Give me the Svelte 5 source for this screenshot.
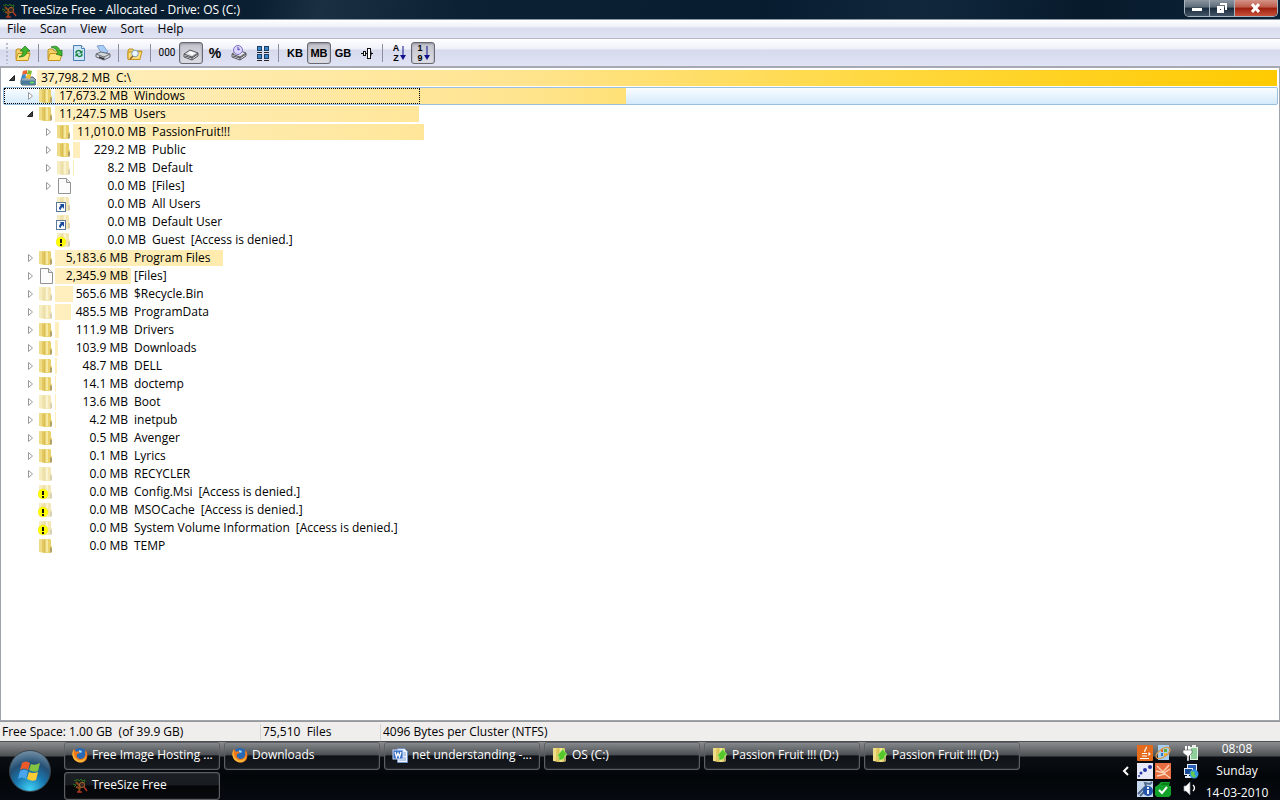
<script>
  const menus = ["File", "Scan", "View", "Sort", "Help"];

  const groups = [
    ["up"],
    ["open", "refresh", "print"],
    ["explore"],
    ["000", "drive", "%", "driveClock", "grid"],
    ["KB", "MB", "GB", "auto"],
    ["az", "19"],
  ];
  const pressed = ["drive", "MB", "19"];
  const textTools = ["000", "%", "KB", "MB", "GB"];

  const total = 37798.2;

  const rows = [
    { depth: 0, size: 37798.2, name: "C:\\", icon: "disk", open: true },
    { depth: 1, size: 17673.2, name: "Windows", icon: "folder", open: false },
    { depth: 1, size: 11247.5, name: "Users", icon: "folder", open: true },
    { depth: 2, size: 11010.0, name: "PassionFruit!!!", icon: "folder", open: false },
    { depth: 2, size: 229.2, name: "Public", icon: "folder", open: false },
    { depth: 2, size: 8.2, name: "Default", icon: "faded", open: false },
    { depth: 2, size: 0, name: "[Files]", icon: "file", open: false },
    { depth: 2, size: 0, name: "All Users", icon: "link" },
    { depth: 2, size: 0, name: "Default User", icon: "link" },
    { depth: 2, size: 0, name: "Guest", icon: "denied" },
    { depth: 1, size: 5183.6, name: "Program Files", icon: "folder", open: false },
    { depth: 1, size: 2345.9, name: "[Files]", icon: "file", open: false },
    { depth: 1, size: 565.6, name: "$Recycle.Bin", icon: "faded", open: false },
    { depth: 1, size: 485.5, name: "ProgramData", icon: "faded", open: false },
    { depth: 1, size: 111.9, name: "Drivers", icon: "folder", open: false },
    { depth: 1, size: 103.9, name: "Downloads", icon: "folder", open: false },
    { depth: 1, size: 48.7, name: "DELL", icon: "folder", open: false },
    { depth: 1, size: 14.1, name: "doctemp", icon: "folder", open: false },
    { depth: 1, size: 13.6, name: "Boot", icon: "faded", open: false },
    { depth: 1, size: 4.2, name: "inetpub", icon: "folder", open: false },
    { depth: 1, size: 0.5, name: "Avenger", icon: "folder", open: false },
    { depth: 1, size: 0.1, name: "Lyrics", icon: "folder", open: false },
    { depth: 1, size: 0, name: "RECYCLER", icon: "faded", open: false },
    { depth: 1, size: 0, name: "Config.Msi", icon: "denied" },
    { depth: 1, size: 0, name: "MSOCache", icon: "denied" },
    { depth: 1, size: 0, name: "System Volume Information", icon: "denied" },
    { depth: 1, size: 0, name: "TEMP", icon: "folder" },
  ];

  const tasks = [
    { label: "Free Image Hosting ...", icon: "firefox" },
    { label: "Downloads", icon: "firefox" },
    { label: "net understanding -...", icon: "word" },
    { label: "OS (C:)", icon: "explorer" },
    { label: "Passion Fruit !!! (D:)", icon: "explorer" },
    { label: "Passion Fruit !!! (D:)", icon: "explorer" },
    { label: "TreeSize Free", icon: "tree", active: true },
  ];

  const trayApps = ["java", "update", "dots", "fan", "info", "safe"];
  const traySystem = ["power", "network", "volume"];

  let selected = $state(1);

  function formatSize(size) {
    return size.toLocaleString("en-US", {
      minimumFractionDigits: 1,
      maximumFractionDigits: 1,
    });
  }
</script>

{#snippet glyph(name)}
  <svg width="16" height="16" viewBox="0 0 16 16" aria-hidden="true">
    {#if name === "tree"}
      <path d="M7 15L8 9L4 5M8 9L11 5M8 11L4 10" stroke="#8a4a18" stroke-width="2" fill="none" />
      <path d="M2 3l2 1 1-2 2 2 2-2 1 2 3-1-1 3M1 7l3 1-2 2" stroke="#2a6e1c" fill="none" />
      <circle cx="10" cy="8" r="2.6" fill="#3a2a20" stroke="#a8602c" />
      <path d="M12 10l3 4M5 15h5" stroke="#b03420" stroke-width="1.500" />
    {:else if name === "up" || name === "open" || name === "explore"}
      <path d="M1 14V5l1-1h4l1 2h7v2" fill="#f3d067" stroke="#b8902c" />
      {#if name === "explore"}
        <path d="M1 14.500V7h10l4-1-2 8.500z" fill="#ffdc78" stroke="#c6941e" />
        <circle cx="8" cy="8.500" r="3.300" fill="#eaf6ff" stroke="#7f9fb5" />
        <path d="M6 11l-3 3" stroke="#8a6030" stroke-width="1.600" />
      {:else}
        <path d="M1 15.500L3 8.500h12l-2 7z" fill="#ffe27a" stroke="#c6941e" />
      {/if}
      {#if name === "up"}
        <path d="M4 12c3-1 4-3 4-6H5l5-5 5 5h-3c0 4-3 6-8 6z" fill="#42b72e" stroke="#197017" stroke-width=".7" />
      {:else if name === "open"}
        <path d="M4 2c5-2 8 0 9 4l2-1v6L9 9l2-1C10 5 8 3 4 2z" fill="#42b72e" stroke="#197017" stroke-width=".7" />
      {/if}
    {:else if name === "refresh"}
      <path d="M2.500 .5h8l3 3v12h-11z" fill="#cfe6fb" stroke="#4a7fb3" />
      <path d="M10.500 .5v3h3" fill="#fff" stroke="#4a7fb3" />
      <path d="M5 8c0-3 4-3 5-1M11 9c0 3-4 3-5 1" fill="none" stroke="#15803a" stroke-width="1.500" />
      <path d="M11.500 5v3.500H8zM4.500 12V8.500H8z" fill="#15803a" />
    {:else if name === "print"}
      <path d="M2 1l6-1 5 7-6 2z" fill="#a9cdf5" stroke="#6c92c0" stroke-width=".8" />
      <path d="M1 9l5-2 9 2v3l-6 3-8-3z" fill="#d5d7dd" stroke="#666b78" />
      <path d="M1 9l8 3 6-3M9 12v3" fill="none" stroke="#666b78" />
      <path d="M4 12l5 2" stroke="#333" stroke-width="1.500" />
    {:else if name === "drive" || name === "driveClock"}
      <path d="M1 9l6-4 8 3v3l-6 4-8-3z" fill="#dfdfe3" stroke="#55565e" />
      <path d="M1 9l8 3 6-4M9 12v3M2 11l7 2 6-4" fill="none" stroke="#55565e" />
      <path d="M5 8l3-1.500 4 1.500-3 2z" fill="#fff" />
      {#if name === "driveClock"}
        <circle cx="7" cy="5" r="4.500" fill="#dcd7ff" stroke="#7c70c4" />
        <path d="M7 5V2M7 5l2-1" stroke="#5346a8" />
      {/if}
    {:else if name === "grid"}
      <g fill="#3a86c8" stroke="#173f66">
        <rect x="2.500" y="1.500" width="4" height="4" /><rect x="9.500" y="1.500" width="4" height="4" />
        <rect x="2.500" y="9.500" width="4" height="4" /><rect x="9.500" y="9.500" width="4" height="4" />
      </g>
      <path d="M2 7.500h5M9 7.500h5M2 15.500h5M9 15.500h5" stroke="#222" />
    {:else if name === "auto"}
      <path d="M2 8.500h2M12 8.500h2" stroke="#111" />
      <rect x="4.500" y="6.500" width="2" height="4" fill="#fff" stroke="#111" />
      <path d="M7 8.500h2M12 6.500v4" stroke="#111" />
      <rect x="8.500" y="3.500" width="3" height="10" fill="#fff" stroke="#111" />
    {:else if name === "disk"}
      <path d="M1 10l2-3h10l3 3v4l-1 1H2l-1-1z" fill="#9aabb8" stroke="#50636f" />
      <path d="M1 10.500h14v4H1z" fill="#47799b" />
      <path d="M10 12.500h4" stroke="#6bea57" stroke-width="1.500" />
      <path d="M3 1l4-1v4L2 5z" fill="#e9672d" /><path d="M8 0l4 1-1 4-4-1z" fill="#7cbb35" />
      <path d="M2 5l4-1-1 4-4 1z" fill="#368bd1" /><path d="M7 4l4 1-1 4-4-1z" fill="#f8c12a" />
    {:else if name === "file"}
      <path d="M2.500 .5h8l4 4v11h-12z" fill="#fcfcfd" stroke="#929292" />
      <path d="M10.500 .5v4h4" fill="#e8e8ec" stroke="#929292" />
    {:else if ["folder", "faded", "link", "denied", "explorer"].includes(name)}
      <g opacity={name === "folder" || name === "explorer" ? 1 : 0.5}>
        <path d="M1 1h6v14l-6-1z" fill="#eedc88" />
        <path d="M4 2l3-1v14l-3-1z" fill="#e2c85e" />
        <path d="M7 1h5l1 1v5l1 2v5l-3 1H7z" fill="#ead16c" />
        <path d="M7 2l3-1v13l-3 1z" fill="#f6e89c" />
        <path d="M7 2v13" stroke="#c9a93c" stroke-width=".7" />
        <path d="M12 9l2 1v4l-2 1z" fill="#b0a268" />
      </g>
      {#if name === "link"}
        <rect x=".5" y="6.500" width="9" height="9" fill="#fff" stroke="#5b7896" />
        <path d="M3 13c0-2 1-3 2-4L3.500 8H8v5L6.500 11C5 12 5 13 5 14z" fill="#164c9b" />
      {:else if name === "denied"}
        <circle cx="5" cy="10" r="5" fill="#ffff00" stroke="#e6df29" stroke-width=".5" />
        <path d="M5 7v4M5 12v2" stroke="#111" stroke-width="2" />
      {:else if name === "explorer"}
        <path d="M7 13V9H5l6-7 4 6h-2c0 3-2 5-6 5z" fill="#55c72b" stroke="#a8e879" stroke-width=".7" />
      {/if}
    {:else if name === "firefox"}
      <circle cx="8" cy="8" r="7" fill="#2869b5" />
      <path d="M2 2C-1 7 1 15 8 15.500S17 9 14 3l-1 2c1 4-1 7-4 7-3 0-5-2-4-5l3-1-2-2-2 1z" fill="#f17819" />
      <path d="M2 2c-1 4 0 9 4 11 4 1 7-1 8-4 0 6-5 7-8 6C0 13-1 6 2 2z" fill="#fcb838" />
      <path d="M7 3l3 1-1 2-2-1z" fill="#9fd7fa" />
    {:else if name === "word"}
      <path d="M5.500 1.500h7l3 3v11h-10z" fill="#f1f6ff" stroke="#6e91cb" />
      <path d="M7 11h7M7 13h7M11 6h3M11 8h3" stroke="#809bcf" />
      <rect x="1" y="3" width="10" height="9" fill="#396fc4" stroke="#c9dcff" />
      <path d="M3 5l1.500 5L6 6l1.500 4L9 5" fill="none" stroke="#fff" stroke-width="1.300" />
    {:else if name === "java"}
      <rect width="16" height="16" rx="1" fill="#e46a1c" />
      <path d="M9 2c2 2-3 3-1 5M5 8.500h5M5 11h5M11 8c3 0 2 2 0 2M3 13.500h9" fill="none" stroke="#fff" stroke-width="1.200" />
    {:else if name === "update"}
      <rect x="3" y="0" width="11" height="15" fill="#a5cdf0" />
      <path d="M6 4h2v3H6z" fill="#e35b2d" /><path d="M9 4h3v3H9z" fill="#62ad38" />
      <path d="M6 8h2v3H6z" fill="#3179c7" /><path d="M9 8h3v3H9z" fill="#efb92e" />
      <ellipse cx="8" cy="8" rx="8" ry="4" transform="rotate(-35 8 8)" fill="none" stroke="#d99a4b" stroke-width="1.300" />
    {:else if name === "dots"}
      <rect width="16" height="16" fill="#e8eafa" />
      <g fill="#2636a4"><circle cx="4" cy="10" r="1.500" /><circle cx="8" cy="7" r="2" /><circle cx="13" cy="4" r="2" /><circle cx="2" cy="13" r="1" /></g>
    {:else if name === "fan"}
      <rect width="16" height="16" fill="#e76f42" />
      <path d="M2 3l6 6 6-7M1 8l8 2 6-4M2 13l8-2 5 4" fill="none" stroke="#ffd2b6" stroke-width="1.300" />
    {:else if name === "info"}
      <rect width="16" height="16" fill="#c6d8ef" />
      <path d="M1 13L9 5l-1-3 5 1 2-2M3 15l8-8" stroke="#526b8c" stroke-width="2" fill="none" />
      <circle cx="11" cy="10" r="5" fill="#2554ab" />
      <path d="M11 6v2M11 9v4" stroke="#fff" stroke-width="1.800" />
    {:else if name === "safe"}
      <path d="M0 6l3-2 3-3h9l-1 4h2v9l-2 2H2l-2-2z" fill="#13a32a" />
      <path d="M7 2h7l-1 2H6z" fill="#078019" />
      <path d="M4 9l3 3 5-6" fill="none" stroke="#fff" stroke-width="2" />
    {:else if name === "power"}
      <rect x="7.500" y="2.500" width="7" height="12" fill="#8fd09a" stroke="#e8f6e8" />
      <path d="M9 0h4v2H9z" fill="#eee" />
      <path d="M3 1v4M6 1v4" stroke="#fff" stroke-width="2" />
      <path d="M0 5h9v3l-3 3v5H4v-5L0 8z" fill="#fff" stroke="#333" stroke-width=".5" />
    {:else if name === "network"}
      <rect x="4.500" y="1.500" width="9" height="7" fill="#285db2" stroke="#e5effa" />
      <rect x="1.500" y="5.500" width="8" height="6" fill="#1a4993" stroke="#e5effa" />
      <path d="M2 14h7M5 11v3" stroke="#dfe9f1" stroke-width="2" />
      <circle cx="11" cy="11" r="4.500" fill="#2e94dd" />
      <path d="M8 8l4 1-1 2 2 2-2 2-3-3z" fill="#65c94f" />
    {:else if name === "volume"}
      <path d="M1 5h2l4-4v13l-4-4H1z" fill="#fff" stroke="#929ba5" stroke-width=".7" />
      <path d="M10 4c2 2 2 4 0 6" fill="none" stroke="#fff" stroke-width="1.300" />
    {/if}
  </svg>
{/snippet}

<div class="desktop">
  <header class="titlebar">
    {@render glyph("tree")}
    <h1>TreeSize Free - Allocated - Drive: OS (C:)</h1>
    <div class="window-buttons">
      <button aria-label="Minimize">
        <svg width="12" height="10"><rect x="1" y="5" width="10" height="3" fill="#fff" /></svg>
      </button>
      <button aria-label="Restore">
        <svg width="12" height="12">
          <path d="M4 1h7v7H9V3H4z" fill="#fff" />
          <path d="M1 4h7v7H1zM4 7v1h1V7z" fill="#fff" fill-rule="evenodd" />
        </svg>
      </button>
      <button class="close" aria-label="Close">
        <svg width="12" height="10"><path d="M2 1l7 8M9 1L2 9" stroke="#fff" stroke-width="3" /></svg>
      </button>
    </div>
  </header>

  <nav class="menubar">
    {#each menus as menu}
      <button>{menu}</button>
    {/each}
  </nav>

  <div class="toolbar" role="toolbar" aria-label="Main toolbar">
    <span class="grip"></span>
    {#each groups as group, i}
      {#if i > 0}
        <span class="separator"></span>
      {/if}
      {#each group as tool}
        <button
          class="tool"
          class:pressed={pressed.includes(tool)}
          class:digits={tool === "000"}
          class:percent={tool === "%"}
          aria-label={tool}
        >
          {#if textTools.includes(tool)}
            {tool}
          {:else if tool === "az" || tool === "19"}
            <span class="sort-keys">
              <span>{tool === "az" ? "A" : "1"}</span>
              <span>{tool === "az" ? "Z" : "9"}</span>
            </span>
            <svg width="6" height="16"><path d="M3 1v11" stroke="#11118c" /><path d="M0 10h6l-3 5z" fill="#11118c" /></svg>
          {:else}
            {@render glyph(tool)}
          {/if}
        </button>
      {/each}
    {/each}
  </div>

  <main class="tree" role="tree">
    {#each rows as row, i}
      <!-- svelte-ignore a11y_click_events_have_key_events -->
      <div
        class="row depth-{row.depth}"
        class:selected={i === selected}
        role="treeitem"
        tabindex="-1"
        aria-level={row.depth + 1}
        aria-selected={i === selected}
        onclick={() => (selected = i)}
      >
        {#if row.open === undefined}
          <span class="expander"></span>
        {:else}
          <button class="expander" aria-label={row.open ? "Collapse" : "Expand"}>
            <svg width="8" height="10">
              {#if row.open}
                <path d="M1.500 7.500l5-5v5z" fill="#404040" stroke="#222" />
              {:else}
                <path d="M2.500 1.500v7l4-3.500z" fill="#fff" stroke="#999" />
              {/if}
            </svg>
          </button>
        {/if}
        {@render glyph(row.icon)}
        <div class="cell">
          <div class="bar" style:width="{(row.size / total) * 100}%"></div>
          <div class="label">
            <span class="size">{formatSize(row.size)} MB</span>
            <span>{row.name}</span>
            {#if row.icon === "denied"}
              <span>[Access is denied.]</span>
            {/if}
          </div>
        </div>
      </div>
    {/each}
  </main>

  <footer class="statusbar">
    <span class="free">Free Space: 1.00 GB&nbsp; (of 39.9 GB)</span>
    <span class="files">75,510&nbsp; Files</span>
    <span>4096 Bytes per Cluster (NTFS)</span>
  </footer>

  <div class="taskbar">
    <button class="start" aria-label="Start">
      <svg width="26" height="26" viewBox="0 0 26 26">
        <path d="M5 5q4-3 8 0l-2 7q-4-3-8 0z" fill="#ec5a2a" />
        <path d="M14 6q4 2 9-1l-2 8q-4 2-9-1z" fill="#84c441" />
        <path d="M3 13q4-3 8 0l-2 8q-4-3-8 0z" fill="#4aa5ec" />
        <path d="M12 14q4 2 9 0l-2 8q-4 2-9-1z" fill="#fccb36" />
      </svg>
    </button>
    <div class="tasks">
      {#each tasks as task}
        <button class="task" class:active={task.active}>
          {@render glyph(task.icon)}
          <span>{task.label}</span>
        </button>
      {/each}
    </div>
    <button class="chevron" aria-label="Show hidden icons">
      <svg width="8" height="10"><path d="M6 1L2 5l4 4" fill="none" stroke="#fff" stroke-width="2" /></svg>
    </button>
    <div class="tray-apps">
      {#each trayApps as app}
        {@render glyph(app)}
      {/each}
    </div>
    <div class="tray-system">
      {#each traySystem as item}
        {@render glyph(item)}
      {/each}
    </div>
    <div class="clock">
      <span>08:08</span>
      <span>Sunday</span>
      <span>14-03-2010</span>
    </div>
  </div>
</div>

<style>
  :global(body) {
    background: #000;
  }

  .desktop {
    display: flex;
    flex-direction: column;
    min-height: 100vh;
    color: #000;
    font-family: "Open Sans", "Noto Sans", sans-serif;
    font-size: 12px;
    line-height: 16px;
  }

  button {
    margin: 0;
    padding: 0;
    border: 0;
    background: none;
    color: inherit;
    font: inherit;
  }

  svg {
    display: block;
    flex: none;
  }

  .titlebar {
    display: flex;
    align-items: center;
    height: 20px;
    padding: 0 2px 0 1px;
    border-bottom: 1px solid #8c99a6;
    box-sizing: border-box;
    background: linear-gradient(100deg, #061c30 0%, #0a1f31 20%, #1a3042 25%, #0c2234 36%, #081c30 60%, #11283c 72%, #071a2c 85%, #0c2438 100%);
    color: #fff;
  }

  h1 {
    flex: 1;
    margin: 0 0 0 4px;
    font-size: 12px;
    font-weight: 400;
  }

  .window-buttons {
    display: flex;
    align-self: flex-start;
    height: 17px;
    border: 1px solid #a9b4be;
    border-top: 0;
    border-radius: 0 0 5px 5px;
    box-sizing: border-box;
    overflow: hidden;
  }

  .window-buttons button {
    display: flex;
    align-items: center;
    justify-content: center;
    width: 25px;
    border-right: 1px solid #a9b4be;
    background: linear-gradient(#8b97a2 0%, #5d6a77 45%, #172a3b 50%, #425466 100%);
  }

  .window-buttons .close {
    width: 42px;
    border-right: 0;
    background: linear-gradient(#d49488 0%, #bd5a48 45%, #9b1d0c 50%, #c8513a 100%);
  }

  .menubar {
    display: flex;
    align-items: center;
    height: 19px;
    border-bottom: 1px solid #b7b7c3;
    box-sizing: border-box;
    background: linear-gradient(#fff 0%, #f0f2fa 35%, #d9ddee 45%, #e0e3f3 100%);
  }

  .menubar button {
    padding: 0 7px;
  }

  .toolbar {
    display: flex;
    align-items: center;
    height: 29px;
    padding-left: 5px;
    border-bottom: 2px solid #a6a9b2;
    box-sizing: border-box;
    background: linear-gradient(#fff 0%, #f0f1fa 35%, #d6daec 42%, #e0e3f4 100%);
  }

  .grip {
    width: 6px;
    height: 22px;
    background: radial-gradient(circle at 2px 2px, #b9bccb 1px, transparent 1px) 0 0 / 6px 4px;
  }

  .separator {
    width: 1px;
    height: 18px;
    margin: 0 4px 0 3px;
    background: #8d8f9d;
  }

  .tool {
    display: flex;
    align-items: center;
    justify-content: center;
    width: 24px;
    height: 22px;
    border: 1px solid transparent;
    border-radius: 3px;
    box-sizing: border-box;
    font-family: "Liberation Sans", sans-serif;
    font-size: 11px;
    font-weight: 700;
  }

  .tool.pressed {
    border-color: #686a73;
    background: linear-gradient(#c2c3cb, #dcdde5);
    box-shadow: inset 0 1px 2px #8d8e98;
  }

  .tool.digits {
    font-family: "Roboto", sans-serif;
    font-size: 10px;
    font-weight: 400;
  }

  .tool.percent {
    font-size: 14px;
  }

  .sort-keys {
    display: flex;
    flex-direction: column;
    width: 8px;
    font-size: 9px;
    line-height: 10px;
  }

  .tree {
    flex: 1;
    padding: 1px 1px 0 2px;
    border: 1px solid #a0a4ac;
    border-width: 0 1px 1px;
    background: #fff;
  }

  .row {
    position: relative;
    display: flex;
    align-items: center;
    height: 18px;
    border: 1px solid transparent;
    border-radius: 2px;
    box-sizing: border-box;
    outline: 0;
  }

  .depth-0 {
    padding-left: 4px;
  }

  .depth-1 {
    padding-left: 22px;
  }

  .depth-2 {
    padding-left: 40px;
  }

  .row.selected {
    border-color: #99bfdd;
    background: linear-gradient(#fafdff, #d3eafb);
  }

  /* focus rectangle over the label part of the row */
  .row.selected::after {
    content: "";
    position: absolute;
    inset: 0 auto 0 0;
    width: 416px;
    border: 1px dotted #000;
    box-sizing: border-box;
  }

  .expander {
    display: flex;
    align-items: center;
    width: 8px;
    height: 16px;
    margin-right: 4px;
  }

  .cell {
    display: grid;
    flex: 1;
    height: 16px;
    margin-left: 1px;
  }

  .bar,
  .label {
    grid-area: 1 / 1;
  }

  .bar {
    background: linear-gradient(90deg, #fff0c4 0%, #ffe490 40%, #ffd83c 70%, #ffca00 100%) fixed;
  }

  .label {
    display: flex;
    gap: 6px;
    white-space: nowrap;
  }

  .size {
    width: 73px;
    text-align: right;
  }

  .statusbar {
    display: flex;
    align-items: center;
    height: 20px;
    border-top: 1px solid #999;
    box-sizing: border-box;
    background: #f0eded;
  }

  .statusbar span {
    padding-left: 2px;
  }

  .statusbar .free,
  .statusbar .files {
    border-right: 1px solid #d6d3d3;
    box-sizing: border-box;
  }

  .statusbar .free {
    width: 261px;
  }

  .statusbar .files {
    width: 120px;
  }

  .taskbar {
    display: flex;
    align-items: center;
    height: 59px;
    border-top: 1px solid #4c4f52;
    box-sizing: border-box;
    background: linear-gradient(#8b8d8f 0, #4d5053 14px, #0b0f14 15px, #030609 34px, #060a10 100%);
    color: #fff;
  }

  .start {
    display: flex;
    align-items: center;
    justify-content: center;
    width: 42px;
    height: 42px;
    margin: 0 13px 0 9px;
    border: 1px solid #39444d;
    border-radius: 50%;
    box-sizing: border-box;
    background: radial-gradient(circle at 50% 95%, #3fd0f5 0%, #1878b0 35%, #244f74 60%, #93a9b8 100%);
  }

  .tasks {
    display: grid;
    flex: 1;
    grid-template-columns: repeat(auto-fill, 156px);
    gap: 2px 4px;
  }

  .task {
    display: flex;
    align-items: center;
    gap: 4px;
    height: 28px;
    padding: 0 7px 2px;
    border: 1px solid #5b5f63;
    border-radius: 3px;
    box-sizing: border-box;
    background: linear-gradient(#85888b 0%, #4c4f53 45%, #0f1318 50%, #171b20 100%);
    box-shadow: inset 0 0 1px #a8acb0;
    white-space: nowrap;
  }

  .task.active {
    background: linear-gradient(#1c2024 0%, #191c20 45%, #040608 50%, #080a0d 100%);
  }

  .chevron {
    margin-right: 7px;
  }

  .tray-apps {
    display: grid;
    grid-template-columns: 16px 16px;
    gap: 2px;
    margin-right: 12px;
  }

  .tray-system {
    display: grid;
    gap: 2px;
  }

  .clock {
    display: flex;
    flex-direction: column;
    align-items: center;
    gap: 6px;
    width: 76px;
    margin-right: 5px;
  }
</style>
